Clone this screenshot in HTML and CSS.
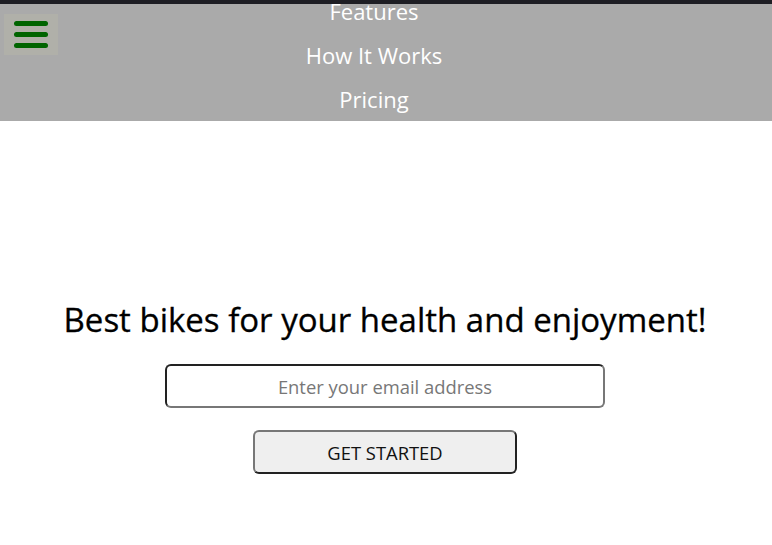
FILE: index.html
```html
<!DOCTYPE html>
<html>
<head>
<meta charset="utf-8">
<link rel="stylesheet" href="styles.css">
</head>
<body>
<div class="topbar"></div>
<header class="header">
  <button class="burger" aria-label="menu">
    <span class="bar"></span><span class="bar"></span><span class="bar"></span>
  </button>
  <nav class="nav">
    <a href="#" class="nav-link">Features</a>
    <a href="#" class="nav-link">How It Works</a>
    <a href="#" class="nav-link">Pricing</a>
  </nav>
</header>
<main class="hero">
  <h1 class="title">Best bikes for your health and enjoyment!</h1>
  <form class="form">
    <input class="email" type="email" placeholder="Enter your email address">
    <button class="cta" type="button">GET STARTED</button>
  </form>
</main>
</body>
</html>
```
FILE: styles.css
```css
* { box-sizing: border-box; }
html, body { margin: 0; padding: 0; background: #fff; }
body { font-family: "Open Sans", sans-serif; width: 772px; height: 545px; overflow: hidden; }
.topbar { position: fixed; top: 0; left: 0; right: 0; height: 4px; background: #1e1e24; z-index: 10; }
.header { position: relative; background: #aaaaaa; height: 121px; overflow: hidden; }
.burger { position: absolute; left: 4px; top: 14px; width: 54px; height: 41px; background: #b0b0a9; border: none; padding: 0; display: flex; flex-direction: column; align-items: center; justify-content: center; gap: 6px; }
.bar { display: block; width: 34px; height: 5px; border-radius: 3px; background: #006400; }
.nav { display: flex; flex-direction: column; align-items: center; margin-top: -11px; padding-right: 24px; }
.nav-link { color: #fff; text-decoration: none; font-size: 22px; line-height: 44px; }
.hero { display: flex; flex-direction: column; align-items: center; padding-top: 174px; padding-right: 2px; }
.title { margin: 0; font-weight: 400; font-size: 33px; line-height: 50px; color: #000; -webkit-text-stroke: 0.3px #000; }
.form { display: flex; flex-direction: column; align-items: center; margin-top: 19px; gap: 22px; }
.email { width: 440px; height: 44px; border: 2px solid; border-color: #222 #777 #777 #222; border-radius: 6px; font-family: "Open Sans", sans-serif; font-size: 18.4px; text-align: center; color: #333; background: #fff; outline: none; }
.email::placeholder { color: #777; }
.cta { width: 264px; height: 44px; border: 2px solid; border-color: #777 #222 #222 #777; border-radius: 6px; background: #efefef; font-family: "Open Sans", sans-serif; font-size: 18.4px; color: #111; }
```
